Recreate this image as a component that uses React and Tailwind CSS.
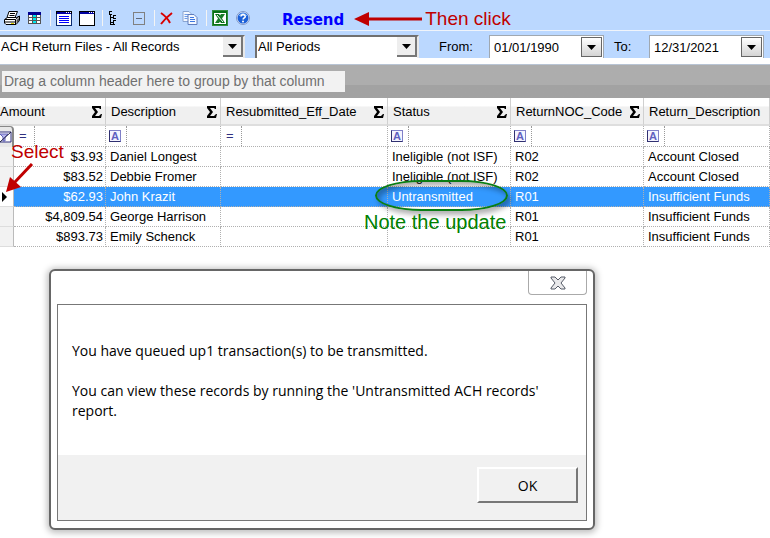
const periods = ['All Periods', 'This Month', 'Last Month', 'This Year']
const reports = ['ACH Return Files - All Records', 'Untransmitted ACH records']

const columns = [
  { key: 'amount', label: 'Amount', op: '=', span: 2, sum: true },
  { key: 'description', label: 'Description', op: 'A', sum: true },
  { key: 'date', label: 'Resubmitted_Eff_Date', op: '=', sum: true },
  { key: 'status', label: 'Status', op: 'A', sum: true },
  { key: 'code', label: 'ReturnNOC_Code', op: 'A', sum: true },
  { key: 'reason', label: 'Return_Description', op: 'A' },
]

const rows = [
  { amount: '$3.93', description: 'Daniel Longest', date: '', status: 'Ineligible (not ISF)', code: 'R02', reason: 'Account Closed' },
  { amount: '$83.52', description: 'Debbie Fromer', date: '', status: 'Ineligible (not ISF)', code: 'R02', reason: 'Account Closed' },
  { amount: '$62.93', description: 'John Krazit', date: '', status: 'Untransmitted', code: 'R01', reason: 'Insufficient Funds', selected: true },
  { amount: '$4,809.54', description: 'George Harrison', date: '', status: '', code: 'R01', reason: 'Insufficient Funds' },
  { amount: '$893.73', description: 'Emily Schenck', date: '', status: '', code: 'R01', reason: 'Insufficient Funds' },
]

function PrintIcon() {
  return (
    <svg width="16" height="15" viewBox="0 0 16 15">
      <path d="M5 .5h8.500l-2.500 6H3z" fill="#fff" stroke="#000" />
      <path d="M6 2.500h5M5.500 4.500h5" stroke="#000" />
      <path d="M.5 8.500l3-2h9l3-1.500v4.500l-3.500 4H2l-1.500-1.500z" fill="#fff" stroke="#000" />
      <path d="M1 8.500h10.500l3.500-3M11.500 8.500v5M1 11h10.500" fill="none" stroke="#000" />
      <path d="M12.500 9l2.500-2v2.500l-2.500 3z" fill="#555" />
      <path d="M7 12h3v1H7z" fill="#e0d000" />
    </svg>
  )
}

function GridIcon() {
  return (
    <svg width="14" height="14" viewBox="0 0 14 14" shapeRendering="crispEdges">
      <path d="M0 1h13v12H0z" fill="#555" />
      <path d="M0 1h13v3H0z" fill="#000090" />
      <path d="M1 4h3v2H1zM9 4h3v2H9zM1 7h3v2H1zM9 7h3v2H9zM1 10h3v2H1zM9 10h3v2H9z" fill="#fff" />
      <path d="M5 4h3v2H5zM5 7h3v2H5zM5 10h3v2H5z" fill="#00e8f0" />
    </svg>
  )
}

function WindowIcon({ lines }) {
  return (
    <svg width="16" height="15" viewBox="0 0 16 15" shapeRendering="crispEdges">
      <path d="M0 0h16v15H0z" fill="#000" />
      <path d="M1 1h14v13H1z" fill="#fff" />
      <path d="M1 1h14v2H1z" fill="#0000a0" />
      <path d="M10 1h1v1h-1zM12 1h1v1h-1zM14 1h1v1h-1z" fill="#fff" />
      {lines && <path d="M3 5h10v1H3zM3 7h10v1H3zM3 9h10v1H3zM3 11h10v1H3z" fill="#0000ff" />}
      {lines && <path d="M0 3h1v12H0zM15 3h1v12h-1zM0 14h16v1H0z" fill="#0a2a70" />}
    </svg>
  )
}

function TreeIcon() {
  return (
    <svg width="8" height="14" viewBox="0 0 8 14" shapeRendering="crispEdges">
      <path d="M0 0h3v1H0zM0 1h1v2H0zM0 3h3v1H0zM1 4h1v9H1zM1 13h5v1H1zM2 6h2v1H2zM2 11h2v1H2z" fill="#000" />
      <path d="M4 4h3v1H4zM4 5h1v3H4zM4 7h3v1H4zM4 9h3v1H4zM4 10h1v3H4z" fill="#000" />
    </svg>
  )
}

function CollapseIcon() {
  return (
    <svg width="12" height="13" viewBox="0 0 12 13" shapeRendering="crispEdges">
      <path d="M0 0h12v13H0zM1 1v11h10V1z" fill="#808080" fillRule="evenodd" />
      <path d="M3 6h6v1H3z" fill="#606878" />
    </svg>
  )
}

function DeleteIcon() {
  return (
    <svg width="13" height="13" viewBox="0 0 13 13">
      <path d="M1 1c3 2 7 6 9 10M12 1C8 4 4 8 1 12" fill="none" stroke="#d80000" strokeWidth="2" />
    </svg>
  )
}

function CopyIcon() {
  return (
    <svg width="16" height="14" viewBox="0 0 16 14">
      <path d="M1 .5h6l2 2v8H1z" fill="#f4f8ff" stroke="#8aa4d0" />
      <path d="M2.500 3.500h4M2.500 5.500h4M2.500 7.500h3" stroke="#6f9ce8" />
      <path d="M6 3.500h6l3 3v7H6z" fill="#f4f8ff" stroke="#5f7cbc" />
      <path d="M8 6.500h4M8 8.500h5M8 10.500h5" stroke="#3f78e0" />
    </svg>
  )
}

function ExcelIcon() {
  return (
    <svg width="16" height="16" viewBox="0 0 16 16">
      <path d="M0 0h16v16H0z" fill="#087018" />
      <path d="M.5 .5h15v15H.5z" fill="none" stroke="#58a860" strokeDasharray="1 1" />
      <path d="M2 3h12v11H2z" fill="#fff" />
      <path d="M3 4h4l6 9H9z" fill="#087018" />
      <path d="M9 4h4l-6 9H3z" fill="#187c28" />
      <path d="M5 5l6 7" stroke="#fff" />
    </svg>
  )
}

function HelpIcon() {
  return (
    <svg width="14" height="14" viewBox="0 0 14 14">
      <circle cx="7" cy="7" r="6.500" fill="#e4ecf8" stroke="#8098c8" />
      <circle cx="7" cy="7" r="5.500" fill="#1c60d8" />
      <path d="M3 5a4.500 4.500 0 0 1 8 0" fill="none" stroke="#78b0f8" />
      <path d="M5 5.500C5 3 9.300 3 9.200 5.400C9.200 7 7.200 6.800 7.100 8.500" fill="none" stroke="#fff" strokeWidth="1.600" />
      <circle cx="7" cy="10.600" r="1" fill="#fff" />
    </svg>
  )
}

function SigmaIcon() {
  return (
    <svg width="10" height="12" viewBox="0 0 10 12" className="shrink-0">
      <path d="M0 0h9v3H8L7 2H3l3 4l-3 4h4l2-2h1l-1 4H0v-2l3-4L0 2z" fill="#000" />
    </svg>
  )
}

function ToolButton({ label, className = '', children }) {
  return (
    <button type="button" aria-label={label} className={`flex shrink-0 items-center justify-center ${className}`}>
      {children}
    </button>
  )
}

function Separator({ className }) {
  return <div className={`h-4 w-px shrink-0 bg-[#f4f4f4] ${className}`} />
}

function DropArrow() {
  return (
    <svg width="9" height="5" viewBox="0 0 9 5">
      <path d="M0 0h9L4.500 5z" fill="#000" />
    </svg>
  )
}

function Combo({ label, options, className }) {
  return (
    <div className={`relative h-[23px] shrink-0 border-2 border-b-0 border-[#707070] border-r-[#e8e8e8] bg-white ${className}`}>
      <select aria-label={label} className="block h-5 w-full appearance-none bg-white pl-px outline-none">
        {options.map((option) => (
          <option key={option}>{option}</option>
        ))}
      </select>
      <span className="pointer-events-none absolute top-0 right-0 flex h-5 w-5 items-center justify-center border-r-2 border-b-2 border-[#777] bg-[#eee]">
        <DropArrow />
      </span>
    </div>
  )
}

function DateBox({ id, label, value, className }) {
  return (
    <>
      <label htmlFor={id} className={`shrink-0 ${className}`}>{label}</label>
      <div className="flex h-[23px] w-[115px] shrink-0 border border-b-0 border-[#a0a8b0] bg-white p-px pl-1">
        <input id={id} defaultValue={value} className="h-5 w-full min-w-0 bg-white outline-none" />
        <button
          type="button"
          aria-label={`Pick ${label}`}
          className="flex h-5 w-[21px] shrink-0 items-center justify-center border border-[#666] bg-linear-to-b from-white to-[#d4d4d4]"
        >
          <DropArrow />
        </button>
      </div>
    </>
  )
}

function FilterCell({ column }) {
  return (
    <div className="flex h-5 items-center">
      {column.op === 'A' ? (
        <span className="ml-[3px] flex size-3 shrink-0 items-center justify-center border border-[#8080c8] border-b-[#303070] border-l-[#303070] bg-[#f4f4ff] text-[11px] leading-3 font-bold text-[#6060c0]">
          A
        </span>
      ) : (
        <span className="ml-[5px] w-[10px] shrink-0 leading-4 text-[#303080]">=</span>
      )}
      <input
        aria-label={`Filter ${column.label}`}
        className="ml-[5px] h-5 w-full min-w-0 border-l border-dotted border-[#999] pl-1 outline-none"
      />
    </div>
  )
}

function RecordsTable() {
  return (
    <table className="w-full table-fixed border-separate border-spacing-0 whitespace-nowrap">
      <colgroup>
        <col className="w-[14px]" />
        <col className="w-[92px]" />
        <col className="w-[115px]" />
        <col className="w-[167px]" />
        <col className="w-[123px]" />
        <col className="w-[133px]" />
        <col />
      </colgroup>
      <thead>
        <tr>
          {columns.map((column) => (
            <th
              key={column.key}
              colSpan={column.span}
              className="h-7 overflow-hidden border-r border-b-2 border-r-[#d0d0d0] border-b-[#dedede] bg-linear-to-b from-white from-30% to-[#f0f0f0] to-35% p-0 pt-0.5 text-left font-normal"
            >
              <div className={`flex items-center justify-between pr-[3px] ${column.span ? '' : 'pl-[5px]'}`}>
                {column.label}
                {column.sum && <SigmaIcon />}
              </div>
            </th>
          ))}
        </tr>
        <tr>
          <td className="h-[21px] overflow-hidden rounded-tr border-t border-r-2 border-[#888] bg-[#e8e8e8] p-0">
            <svg width="12" height="12" viewBox="0 0 12 12" className="block">
              <path d="M0 1h11v10H0" fill="#fff" stroke="#303080" />
              <path d="M0 3h8l-3 3v4H3V6L0 3z" fill="#b8b8f0" stroke="#6060b8" />
              <path d="M0 11L11 1" stroke="#202040" />
            </svg>
          </td>
          {columns.map((column) => (
            <td key={column.key} className="h-[21px] border-r border-b border-dotted border-[#b0b0b0] p-0">
              <FilterCell column={column} />
            </td>
          ))}
        </tr>
      </thead>
      <tbody>
        {rows.map((row) => (
          <tr key={row.description} className={row.selected ? 'bg-[#3399ff] text-white' : 'bg-white'}>
            <th
              scope="row"
              aria-label={row.description}
              className={`h-5 border-r border-b border-r-[#bbb] border-b-[#ddd] p-0 ${row.selected ? 'bg-white' : 'bg-[#f2f2f2]'}`}
            >
              {row.selected && (
                <svg width="5" height="10" viewBox="0 0 5 10" className="ml-0.5 block">
                  <path d="M0 0l5 5l-5 5z" fill="#000" />
                </svg>
              )}
            </th>
            {columns.map((column) => (
              <td
                key={column.key}
                className={`h-5 border-r border-b border-dotted border-[#b0b0b0] py-0 leading-[19px] ${column.key === 'amount' ? 'pr-0.5 text-right' : 'pl-1'}`}
              >
                {row[column.key]}
              </td>
            ))}
          </tr>
        ))}
      </tbody>
    </table>
  )
}

function MessageDialog() {
  return (
    <div
      role="dialog"
      aria-label="Message"
      className="mx-[49px] mt-[22px] mb-2 max-w-[546px] rounded-md border-2 border-[#666] bg-white px-1.5 pb-[7px] shadow-[0_1px_6px_2px_rgba(0,0,0,0.25)]"
    >
      <div className="flex h-[33px] items-start justify-end">
        <button
          type="button"
          aria-label="Close"
          className="flex h-6 w-[59px] items-center justify-center rounded-b border border-t-0 border-[#aaa]"
        >
          <svg width="16" height="14" viewBox="0 0 16 14">
            <path
              d="M1 1h4l3 3l3-3h4v1l-4 5l4 5v1h-4l-3-3l-3 3H1v-1l4-5L1 2z"
              fill="#e8e8ea"
              stroke="#555a66"
              strokeLinejoin="round"
            />
          </svg>
        </button>
      </div>
      <div className="border border-[#777]">
        <div className="h-[150px] px-3.5 pt-9 font-['Open_Sans',sans-serif] text-[14px] leading-5">
          <p>You have queued up1 transaction(s) to be transmitted.</p>
          <p className="mt-5">You can view these records by running the 'Untransmitted ACH records' report.</p>
        </div>
        <div className="flex justify-end bg-[#f1f1f1] px-2 pt-3 pb-[17px]">
          <button
            type="button"
            className="h-9 w-[101px] border-2 border-t-white border-r-[#777] border-b-[#777] border-l-white bg-[#f1f1f1] font-['Open_Sans',sans-serif] text-[14px]"
          >
            OK
          </button>
        </div>
      </div>
    </div>
  )
}

export default function App() {
  return (
    <div className="overflow-hidden bg-white font-['Liberation_Sans',Arial,sans-serif] text-[13px] text-black">
      <div className="flex h-[31px] items-center border-b border-[#f0f4fa] bg-[#bbd8ff] pt-1.5 pl-1">
        <ToolButton label="Print"><PrintIcon /></ToolButton>
        <ToolButton label="Grid" className="ml-2"><GridIcon /></ToolButton>
        <Separator className="ml-2" />
        <ToolButton label="List view" className="ml-[5px]"><WindowIcon lines /></ToolButton>
        <ToolButton label="Form view" className="ml-[7px]"><WindowIcon /></ToolButton>
        <Separator className="ml-[7px]" />
        <ToolButton label="Expand" className="ml-1.5"><TreeIcon /></ToolButton>
        <ToolButton label="Collapse" className="ml-4"><CollapseIcon /></ToolButton>
        <Separator className="ml-[9px]" />
        <ToolButton label="Delete" className="ml-[5px]"><DeleteIcon /></ToolButton>
        <ToolButton label="Copy" className="ml-[9px]"><CopyIcon /></ToolButton>
        <Separator className="ml-2" />
        <ToolButton label="Export to Excel" className="ml-[5px]"><ExcelIcon /></ToolButton>
        <ToolButton label="Help" className="ml-2"><HelpIcon /></ToolButton>
        <div className="ml-8 flex items-center pt-0.5">
          <button type="button" className="pt-0.5 font-['DejaVu_Sans',sans-serif] text-[15px] leading-5 font-bold text-[#0000ff]">
            Resend
          </button>
          <svg width="69" height="16" viewBox="0 0 69 16" className="ml-2.5 shrink-0">
            <path d="M14 8h54" stroke="#c00000" strokeWidth="3" />
            <path d="M0 8l15-7v14z" fill="#c00000" />
          </svg>
          <span className="ml-0.5 text-[19px] leading-5 whitespace-nowrap text-[#c00000]">Then click</span>
        </div>
      </div>

      <div className="flex h-[27px] items-center bg-[#bbd8ff] pt-1">
        <Combo label="Report" options={reports} className="w-[245px] border-l-0" />
        <Combo label="Period" options={periods} className="ml-2.5 w-[164px]" />
        <DateBox id="from" label="From:" value="01/01/1990" className="ml-5 w-[50px]" />
        <DateBox id="to" label="To:" value="12/31/2021" className="ml-2.5 w-[35px]" />
      </div>

      <div className="h-[7px] border-b border-[#b8c4d4] bg-white" />
      <div className="bg-linear-to-b from-[#adadad] from-60% to-[#a2a2a2] to-60% px-0.5 pt-1.5 pb-1.5">
        <div className="h-[21px] w-fit bg-[#f2f2f2] pr-5 pl-0.5 text-[14px] leading-[21px] whitespace-nowrap text-[#707070]">
          Drag a column header here to group by that column
        </div>
      </div>

      <div className="relative">
        <RecordsTable />
        <span className="absolute top-[44px] left-[11px] text-[19px] leading-5 text-[#c00000]">Select</span>
        <svg width="30" height="32" viewBox="0 0 30 32" className="absolute top-[65px] left-[5px]">
          <path d="M27 1L9 20" stroke="#c00000" strokeWidth="3" />
          <path d="M1 29L5 14l11 10z" fill="#c00000" />
        </svg>
        <div className="absolute top-[82px] left-[375px] h-[31px] w-[133px] rounded-[35%/50%] border-2 border-[#0a7d14] shadow-[3px_4px_5px_rgba(0,0,0,0.3),inset_3px_4px_5px_rgba(0,0,0,0.3)]" />
        <span className="absolute top-[114px] left-[364px] text-[20px] leading-5 whitespace-nowrap text-[#008000]">Note the update</span>
      </div>

      <MessageDialog />
    </div>
  )
}
